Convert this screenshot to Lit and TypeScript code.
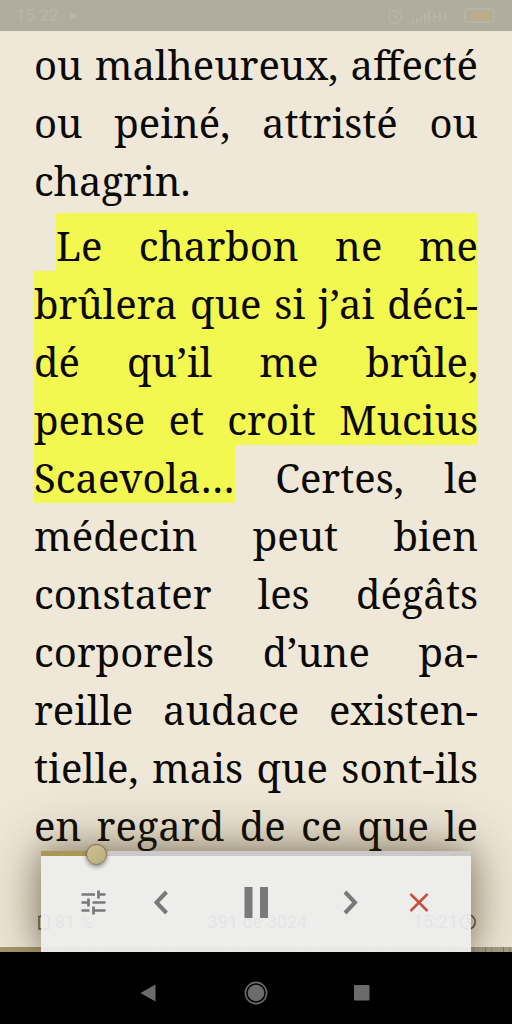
import { LitElement, html, css } from "lit";
import { customElement, state } from "lit/decorators.js";
import { classMap } from "lit/directives/class-map.js";

interface Line {
  text: string;
  marked?: boolean;
  rest?: string;
  indent?: boolean;
  last?: boolean;
}

const PARAGRAPHS: Line[][] = [
  [
    { text: "ou malheureux, affecté" },
    { text: "ou peiné, attristé ou" },
    { text: "chagrin.", last: true },
  ],
  [
    { text: "Le charbon ne me", marked: true, indent: true },
    { text: "brûlera que si j’ai déci-", marked: true },
    { text: "dé qu’il me brûle,", marked: true },
    { text: "pense et croit Mucius", marked: true },
    { text: "Scaevola…", marked: true, rest: " Certes, le" },
    { text: "médecin peut bien" },
    { text: "constater les dégâts" },
    { text: "corporels d’une pa-" },
    { text: "reille audace existen-" },
    { text: "tielle, mais que sont-ils" },
    { text: "en regard de ce que le" },
  ],
];

@customElement("status-bar")
class StatusBar extends LitElement {
  static styles = css`
    :host {
      display: flex;
      align-items: center;
      justify-content: space-between;
      height: 31px;
      padding: 0 16px;
      box-sizing: border-box;
      background: #b0ad9f;
      color: #b8b6a9;
      font: 17px/31px Roboto, sans-serif;
    }
    .group {
      display: flex;
      align-items: center;
      gap: 12px;
    }
  `;
  render() {
    return html`
      <div class="group">
        <span>15:22</span>
        <svg width="8" height="10" viewBox="0 0 8 10"><path d="M1 1l6 4-6 4z" fill="#bab8ab" /></svg>
      </div>
      <div class="group">
        <svg width="66" height="18" viewBox="0 0 66 18" fill="none" stroke="#b7b5a8" stroke-width="1.5">
          <circle cx="9" cy="10" r="6" />
          <path d="M9 7v3h3M2 5l3-3M13 2l3 3" />
          <path d="M27 16v-3M31 16v-5M35 16V9M39 16V6M43 16V3" stroke-width="2" />
          <path d="M48 5v10M48 10h6M54 5v10M59 6v8" stroke-width="2" />
        </svg>
        <svg width="32" height="16" viewBox="0 0 32 16">
          <rect x="1" y="1" width="29" height="13" rx="4" fill="none" stroke="#b7b5a6" stroke-width="2" />
          <rect x="6" y="4" width="21" height="8" rx="2" fill="#bbae89" />
        </svg>
      </div>
    `;
  }
}

@customElement("book-page")
class BookPage extends LitElement {
  static styles = css`
    :host {
      display: flex;
      flex-direction: column;
      flex: 1;
      min-width: 0;
    }
    .text {
      flex: 1;
      padding: 1px 34px 0;
      font: 40px/50px "Noto Serif", "DejaVu Serif Condensed", "DejaVu Serif", serif;
      color: #0b0906;
    }
    .para {
      margin: 0 0 7px;
    }
    .line {
      display: block;
      padding-top: 8px;
      white-space: nowrap;
      text-align: justify;
      text-align-last: justify;
    }
    .indent {
      margin-left: 22px;
    }
    .last {
      text-align-last: left;
    }
    .full {
      background: #f3f850;
    }
    .mixed {
      padding-top: 0;
    }
    .mark {
      display: inline-block;
      padding-top: 8px;
      background: #f3f850;
      color: inherit;
    }
    .footer {
      display: grid;
      grid-template-columns: 1fr auto 1fr;
      padding: 0 35px 13px 38px;
      font: 18px/24px Roboto, sans-serif;
      color: #5d5b52;
    }
    .item {
      display: flex;
      align-items: center;
      gap: 5px;
    }
    .end {
      justify-content: flex-end;
      gap: 1px;
    }
    .progress {
      height: 5px;
      background: repeating-linear-gradient(90deg, #a59f89 0 5px, #8d8974 5px 6px, #a39d88 6px 17px, #7e7a68 17px 18px);
    }
    .read {
      width: 13%;
      height: 5px;
      background: #a3976c;
    }
  `;
  render() {
    return html`
      <div class="text">
        ${PARAGRAPHS.map(
          (lines) => html`<p class="para">
            ${lines.map(
              (l) => html`<span
                class=${classMap({
                  line: true,
                  indent: !!l.indent,
                  last: !!l.last,
                  full: !!l.marked && !l.rest,
                  mixed: !!l.rest,
                })}
                >${l.rest ? html`<mark class="mark">${l.text}</mark>${l.rest}` : l.text}</span
              >`
            )}
          </p>`
        )}
      </div>
      <div class="footer">
        <span class="item">
          <svg width="12" height="16" viewBox="0 0 12 16" fill="none" stroke="#5d5b52" stroke-width="1.5">
            <path d="M1 2.500h2.500V1h5v1.500H11V15H1z" />
          </svg>
          81 %
        </span>
        <span>391 de 3024</span>
        <span class="item end">
          15:21
          <svg width="18" height="18" viewBox="0 0 18 18" fill="none" stroke="#5d5b52" stroke-width="1.6">
            <circle cx="9" cy="9" r="7.200" />
            <path d="M9 4.500v5h3" />
          </svg>
        </span>
      </div>
      <div class="progress"><div class="read"></div></div>
    `;
  }
}

@customElement("speech-player")
class SpeechPlayer extends LitElement {
  @state() value = 11;

  static styles = css`
    :host {
      display: block;
      background: rgba(237, 237, 237, 0.94);
      box-shadow: 0 0 60px 2px rgba(70, 56, 16, 0.5), 0 0 24px rgba(40, 34, 20, 0.3);
    }
    .speed {
      appearance: none;
      display: block;
      width: 100%;
      height: 22px;
      margin: -8px 0 0;
      background: linear-gradient(#a99756, #a99756) 0 8px / 13% 5px no-repeat,
        linear-gradient(#cbc9c8, #cbc9c8) 0 8px / 100% 5px no-repeat;
      outline: none;
    }
    .speed::-webkit-slider-thumb {
      appearance: none;
      box-sizing: border-box;
      width: 21px;
      height: 21px;
      border: 1px solid #7c7045;
      border-radius: 50%;
      background: linear-gradient(135deg, #cdc395, #b9ad7c);
      box-shadow: 0 2px 4px rgba(0, 0, 0, 0.4);
    }
    .controls {
      display: flex;
      justify-content: space-between;
      align-items: center;
      padding: 17px 32px 30px;
    }
    .btn {
      display: flex;
      padding: 0;
      border: 0;
      background: none;
      color: #797979;
    }
  `;
  render() {
    return html`
      <input
        class="speed"
        type="range"
        aria-label="Vitesse"
        min="0"
        max="100"
        .value=${String(this.value)}
      />
      <div class="controls">
        <button class="btn" aria-label="Options">
          <svg width="40" height="40" viewBox="0 0 40 40" fill="none" stroke="currentColor" stroke-width="2.700">
            <path d="M8.500 12.500h13.500M25.500 12.500h7M25.500 8.500v8M8.500 20.500h7.500M15.500 16.500v8M19.500 20.500h13M8.500 28.500h8M20.500 24.500v8M20.500 28.500h12" />
          </svg>
        </button>
        <button class="btn" aria-label="Précédent">
          <svg width="40" height="40" viewBox="0 0 40 40" fill="none" stroke="currentColor" stroke-width="4">
            <path d="M22.500 10L12.500 20.500l10 10.500" />
          </svg>
        </button>
        <button class="btn" aria-label="Pause">
          <svg width="80" height="40" viewBox="-8 0 80 40" fill="currentColor">
            <path d="M20.500 5h8v31h-8zM36 5h8v31h-8z" />
          </svg>
        </button>
        <button class="btn" aria-label="Suivant">
          <svg width="40" height="40" viewBox="0 0 40 40" fill="none" stroke="currentColor" stroke-width="4">
            <path d="M17 10l10 10.500L17 31" />
          </svg>
        </button>
        <button class="btn" aria-label="Fermer">
          <svg width="40" height="40" viewBox="0 0 40 40" fill="none" stroke="#c9503f" stroke-width="2.500">
            <path d="M11.500 12l17 17M28.500 12l-17 17" />
          </svg>
        </button>
      </div>
    `;
  }
}

@customElement("nav-bar")
class NavBar extends LitElement {
  static styles = css`
    :host {
      display: flex;
      justify-content: center;
      align-items: center;
      gap: 82px;
      height: 72px;
      padding-top: 10px;
      box-sizing: border-box;
      background: #000;
    }
    .btn {
      display: flex;
      padding: 0;
      border: 0;
      background: none;
      color: #6b6b6b;
    }
  `;
  render() {
    return html`
      <button class="btn" aria-label="Retour">
        <svg width="24" height="24" viewBox="0 0 24 24"><path d="M2.500 12L17.500 3.500v17z" fill="currentColor" /></svg>
      </button>
      <button class="btn" aria-label="Accueil">
        <svg width="24" height="24" viewBox="0 0 24 24">
          <circle cx="12" cy="12" r="10.600" fill="none" stroke="currentColor" stroke-width="1.600" />
          <circle cx="12" cy="12" r="8.300" fill="currentColor" />
        </svg>
      </button>
      <button class="btn" aria-label="Applications">
        <svg width="24" height="24" viewBox="0 0 24 24"><rect x="4" y="4" width="15.500" height="15.500" rx="1" fill="currentColor" /></svg>
      </button>
    `;
  }
}

@customElement("app-root")
class AppRoot extends LitElement {
  static styles = css`
    :host {
      display: flex;
      flex-direction: column;
      min-height: 100vh;
      background: #efe8d9;
    }
    .reader {
      position: relative;
      display: flex;
      flex: 1;
      overflow: hidden;
    }
    .player {
      position: absolute;
      left: 8%;
      right: 8%;
      bottom: 0;
    }
  `;
  render() {
    return html`
      <status-bar></status-bar>
      <main class="reader">
        <book-page></book-page>
        <speech-player class="player"></speech-player>
      </main>
      <nav-bar></nav-bar>
    `;
  }
}
